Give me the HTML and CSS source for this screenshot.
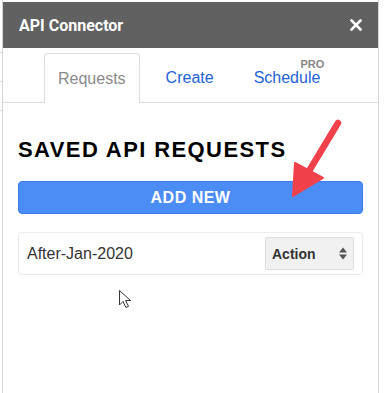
FILE: index.html
```html
<!DOCTYPE html>
<html lang="en">
<head>
    <meta charset="UTF-8" />
    <meta name="viewport" content="width=device-width, initial-scale=1" />
    <title>API Connector</title>
    <link rel="stylesheet" href="styles.css">
</head>
<body>
    <div class="gutter">
        <span class="grid-line"></span>
        <span class="grid-line"></span>
        <span class="grid-line"></span>
    </div>
    <div class="sidebar">
        <header class="sidebar-header">
            <span class="sidebar-title">API Connector</span>
            <svg class="close-icon" width="12" height="12" viewBox="0 0 12 12">
                <path d="M1.5 1.5 L10.5 10.5 M10.5 1.5 L1.5 10.5" stroke="#fff" stroke-width="2.6" stroke-linecap="square" />
            </svg>
        </header>
        <nav class="nav-tabs">
            <a class="tab active">Requests</a>
            <a class="tab">Create</a>
            <a class="tab">Schedule<span class="pro">PRO</span></a>
        </nav>
        <main class="content">
            <h1 class="page-title">SAVED API REQUESTS</h1>
            <button class="add-button">ADD NEW</button>
            <div class="request-row">
                <span class="request-name">After-Jan-2020</span>
                <div class="action-select">
                    <span>Action</span>
                    <svg width="8" height="13" viewBox="0 0 8 13">
                        <path d="M0 5.5 L4 0.5 L8 5.5 Z M0 7.5 L4 12.5 L8 7.5 Z" fill="#555" />
                    </svg>
                </div>
            </div>
        </main>
    </div>

    <!-- annotation overlay: red arrow + mouse cursor -->
    <svg class="overlay" width="388" height="393" viewBox="0 0 388 393">
        <line x1="338" y1="123" x2="306" y2="176" stroke="#f1414b" stroke-width="6.5" stroke-linecap="round" />
        <polygon points="293,196 295,163 323,178" fill="#f1414b" stroke="#f1414b" stroke-width="2" stroke-linejoin="round" />
        <path d="M119.5 290.5 L119.5 305 L123 301.5 L126 307.5 L128.5 306.3 L125.6 300.5 L130.5 300.5 Z" fill="#fff" stroke="#333" stroke-width="1" stroke-linejoin="round" />
    </svg>
</body>
</html>
```

FILE: styles.css
```css
body, html {
    margin: 0;
    padding: 0;
    height: 100%;
    overflow: hidden;
    background: #ffffff;
    font-family: 'Liberation Sans', Arial, sans-serif;
}
body {
    display: flex;
}
.gutter {
    width: 2px;
    display: flex;
    flex-direction: column;
    padding-top: 52px;
    gap: 28px;
}
.grid-line {
    display: block;
    height: 1px;
    background: #dadada;
}
.sidebar {
    width: 375px;
    height: 100%;
    border-left: 1px solid #d6d6d6;
    border-right: 1px solid #d6d6d6;
    display: flex;
    flex-direction: column;
}
.sidebar-header {
    margin-top: 2px;
    height: 46px;
    background-color: #616161;
    display: flex;
    align-items: center;
    justify-content: space-between;
    padding: 0 16px 0 16px;
}
.sidebar-title {
    font-family: Roboto, 'Liberation Sans', sans-serif;
    font-weight: bold;
    font-size: 16px;
    color: #ffffff;
}
.close-icon {
    display: block;
}
.nav-tabs {
    margin-top: 5px;
    display: flex;
    gap: 12px;
    padding-left: 41px;
    border-bottom: 1px solid #dddddd;
    height: 49px;
}
.tab {
    position: relative;
    display: flex;
    align-items: center;
    padding: 0 13px;
    font-size: 16px;
    color: #2463d4;
    border: 1px solid transparent;
    border-bottom: none;
    border-radius: 4px 4px 0 0;
}
.tab.active {
    color: #8a8a8a;
    border-color: #dddddd;
    background: #fff;
    margin-bottom: -1px;
}
.pro {
    position: absolute;
    top: 4px;
    right: 9px;
    font-size: 11px;
    line-height: 12px;
    font-weight: bold;
    color: #888888;
}
.content {
    padding: 0 15px;
}
.page-title {
    margin: 34px 0 0 0;
    font-size: 22px;
    line-height: 26px;
    letter-spacing: 1.4px;
    font-weight: bold;
    color: #000;
}
.add-button {
    display: block;
    width: 100%;
    height: 33px;
    margin-top: 18px;
    background-color: #4c8cf5;
    border: 1px solid #3a7ce8;
    border-radius: 4px;
    color: #fff;
    font-family: 'Liberation Sans', Arial, sans-serif;
    font-weight: bold;
    font-size: 16px;
    letter-spacing: 0.5px;
}
.request-row {
    margin-top: 18px;
    height: 41px;
    border: 1px solid #ececec;
    border-radius: 3px;
    display: flex;
    align-items: center;
    justify-content: space-between;
    padding: 0 8px 0 8px;
}
.request-name {
    font-size: 16px;
    color: #333;
}
.action-select {
    width: 75px;
    height: 31px;
    padding: 0 6px;
    background: #f1f1f1;
    border: 1px solid #dcdcdc;
    border-radius: 2px;
    display: flex;
    align-items: center;
    justify-content: space-between;
    font-size: 14px;
    font-weight: bold;
    color: #333;
}
.overlay {
    position: absolute;
    left: 0;
    top: 0;
    pointer-events: none;
}
```
